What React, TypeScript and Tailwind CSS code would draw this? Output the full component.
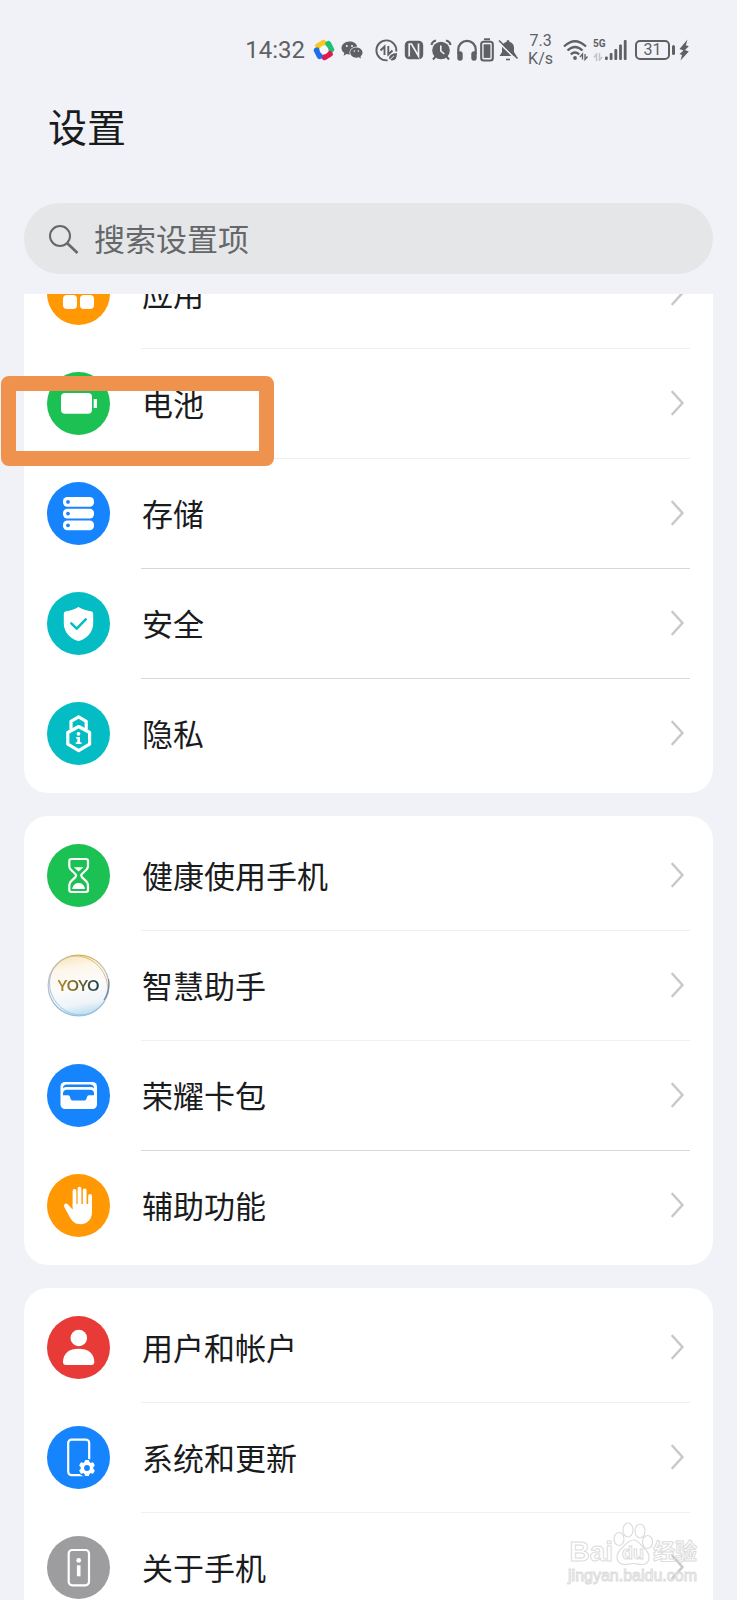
import type { ReactNode } from "react";
import clsx from "clsx";

type Item = {
  label: string;
  bg: string;
  icon: ReactNode;
  strongLine?: boolean;
  marked?: boolean;
};

const AppsIcon = (
  <g fill="#fff">
    <rect x="16" y="16" width="14" height="14" rx="4" />
    <rect x="33" y="16" width="14" height="14" rx="4" />
    <rect x="16" y="33" width="14" height="14" rx="4" />
    <rect x="33" y="33" width="14" height="14" rx="4" />
  </g>
);

const BatteryIcon = (
  <g fill="#fff">
    <rect x="14" y="21" width="31" height="20.7" rx="4" />
    <rect x="46.7" y="27" width="3.3" height="9" rx="0.6" />
  </g>
);

const StorageIcon = (
  <g>
    {[15, 26.7, 38.4].map((y) => (
      <g key={y}>
        <rect x="16" y={y} width="31" height="9.8" rx="4.2" fill="#fff" />
        <circle cx="21" cy={y + 4.9} r="1.9" fill="#1684fc" />
      </g>
    ))}
  </g>
);

const ShieldIcon = (
  <g>
    <path
      d="M31.5 15 C36 17.6 40.5 19 44 19.3 Q46.2 19.5 46.2 21.8 V31.5 C46.2 40 40 45.8 33.5 48.6 Q31.5 49.4 29.5 48.6 C23 45.8 16.8 40 16.8 31.5 V21.8 Q16.8 19.5 19 19.3 C22.5 19 27 17.6 31.5 15 Z"
      fill="#fff"
    />
    <path d="M24.3 31.3 L29.7 36.6 L38.7 27.3" fill="none" stroke="#04bdc4" strokeWidth="2.5" strokeLinecap="round" strokeLinejoin="round" />
  </g>
);

const PrivacyIcon = (
  <g fill="none" stroke="#fff" strokeLinejoin="round">
    <path d="M24 27.5 V19.3 L31.6 14.8 L39.2 19.3 V27.5" strokeWidth="3.2" />
    <path d="M31.7 24.5 L42.6 30.5 V42.2 L31.7 48.6 L20.8 42.2 V30.5 Z" fill="#04bdc4" strokeWidth="3.2" />
    <circle cx="31.5" cy="31.8" r="1.9" fill="#fff" stroke="none" />
    <path d="M29 35 H33 V40.3 H34.5 V42 H28.7 V40.3 H30.3 V36.5 H29 Z" fill="#fff" stroke="none" />
  </g>
);

const HourglassIcon = (
  <g stroke="#fff" strokeWidth="2.2" strokeLinejoin="round">
    <path
      d="M24.5 15 H38.8 Q41 15 41 17.2 V22 C41 27 34.2 28.5 34.2 31.6 C34.2 34.7 41 36.3 41 41.5 V45.8 Q41 48 38.8 48 H24.5 Q22.3 48 22.3 45.8 V41.5 C22.3 36.3 29.1 34.7 29.1 31.6 C29.1 28.5 22.3 27 22.3 22 V17.2 Q22.3 15 24.5 15 Z"
      fill="none"
    />
    <path d="M26.8 23.3 H36.5 L31.6 27.5 Z" fill="#fff" stroke="none" />
    <path d="M25.2 45 C26 40.8 28.5 39 31.6 39 C34.7 39 37.3 40.8 38 45 Z" fill="#fff" stroke="none" />
  </g>
);

const WalletIcon = (
  <g>
    <rect x="13.5" y="18" width="36.5" height="27" rx="4.5" fill="#fff" />
    <g fill="#1684fc">
      <path d="M16 24.2 Q16.2 20.6 20 20.6 H43 Q46.8 20.6 47 24.2 Q45.8 23 43 23 H20 Q17.2 23 16 24.2 Z" />
      <path d="M16 31.2 V29.5 Q16.2 25.8 20 25.8 H43 Q46.8 25.8 47 29.5 V31.2 H42 Q40.7 31.2 40.2 32.5 L39.3 35 Q38.7 36.6 37.2 36.6 H25.8 Q24.3 36.6 23.7 35 L22.8 32.5 Q22.3 31.2 21 31.2 Z" />
    </g>
  </g>
);

const HandIcon = (
  <g fill="#fff" stroke="#fff" strokeLinecap="round">
    <path d="M27.5 32 V17 M32.5 32 V14.7 M37.7 32 V16.5 M43.1 34 V22" strokeWidth="3.8" />
    <path
      d="M25.7 30 H45 V38 C45 46 39.5 50.2 33.5 50.2 C28 50.2 25.5 47.5 23 43.5 L17.3 33 C16 30.2 19 28.3 21 30.4 L25.7 35.5 Z"
      stroke="none"
    />
  </g>
);

const UserIcon = (
  <g fill="#fff">
    <circle cx="31.8" cy="22" r="8.3" />
    <path d="M16 46 C16 37 22.5 32.7 31.6 32.7 C40.7 32.7 47.3 37 47.3 46 Q47.3 49 44.3 49 H19 Q16 49 16 46 Z" />
  </g>
);

const SystemIcon = (
  <g>
    <rect x="21.2" y="13.6" width="21" height="35.6" rx="3.5" fill="none" stroke="#fff" strokeWidth="2.2" />
    <circle cx="40" cy="42" r="9.3" fill="#1684fc" />
    <g fill="#fff">
      <circle cx="40" cy="42" r="6.4" />
      {[0, 60, 120].map((a) => (
        <rect key={a} x="37.7" y="33.9" width="4.6" height="16.2" rx="1.3" transform={`rotate(${a} 40 42)`} />
      ))}
    </g>
    <circle cx="40" cy="42" r="2.9" fill="#1684fc" />
  </g>
);

const AboutIcon = (
  <g>
    <rect x="21.7" y="14" width="20.3" height="35.3" rx="3.5" fill="none" stroke="#fff" strokeWidth="2.2" />
    <circle cx="31.7" cy="24.4" r="2.4" fill="#fff" />
    <rect x="29.9" y="29.3" width="3.6" height="11" fill="#fff" />
  </g>
);

const YoyoIcon = (
  <g fill="none">
    <defs>
      <linearGradient id="bubble" x1="0.4" y1="0" x2="0.6" y2="1">
        <stop offset="0" stopColor="#f9e6bd" />
        <stop offset="0.2" stopColor="#fdf6ea" />
        <stop offset="0.5" stopColor="#fcfbfb" />
        <stop offset="0.8" stopColor="#eef4f8" />
        <stop offset="1" stopColor="#b5dbf3" />
      </linearGradient>
      <linearGradient id="rim" x1="0.4" y1="0" x2="0.6" y2="1">
        <stop offset="0" stopColor="#d9b04a" />
        <stop offset="0.3" stopColor="#c3c6cc" />
        <stop offset="0.7" stopColor="#a9b8c8" />
        <stop offset="1" stopColor="#8cc4ea" />
      </linearGradient>
    </defs>
    <circle cx="31.5" cy="31.5" r="30.3" fill="url(#bubble)" stroke="url(#rim)" strokeWidth="1.3" />
    <ellipse cx="31.5" cy="31.5" rx="30.5" ry="28" stroke="url(#rim)" strokeWidth="0.8" transform="rotate(50 31.5 31.5)" />
    <path d="M61.5 25 Q63.5 36 57 46" stroke="#6f87a0" strokeWidth="1.2" />
  </g>
);

const groups: Item[][] = [
  [
    { label: "应用", bg: "bg-[#ff9803]", icon: AppsIcon },
    { label: "电池", bg: "bg-[#1bc153]", icon: BatteryIcon, marked: true },
    { label: "存储", bg: "bg-[#1684fc]", icon: StorageIcon, strongLine: true },
    { label: "安全", bg: "bg-[#04bdc4]", icon: ShieldIcon, strongLine: true },
    { label: "隐私", bg: "bg-[#04bdc4]", icon: PrivacyIcon },
  ],
  [
    { label: "健康使用手机", bg: "bg-[#1bc153]", icon: HourglassIcon },
    { label: "智慧助手", bg: "bg-white", icon: YoyoIcon },
    { label: "荣耀卡包", bg: "bg-[#1684fc]", icon: WalletIcon, strongLine: true },
    { label: "辅助功能", bg: "bg-[#ff9803]", icon: HandIcon },
  ],
  [
    { label: "用户和帐户", bg: "bg-[#e83b38]", icon: UserIcon },
    { label: "系统和更新", bg: "bg-[#1684fc]", icon: SystemIcon },
    { label: "关于手机", bg: "bg-[#9d9da0]", icon: AboutIcon },
  ],
];

function StatusBar() {
  return (
    <div className="flex h-[100px] shrink-0 items-center justify-end pr-12 font-[Roboto,sans-serif] text-[#5f6063]">
      <span className="text-2xl">14:32</span>
      <svg className="ml-2 h-[22px] w-[22px]" viewBox="0 0 22 22" fill="none" strokeWidth="6" strokeLinecap="round">
        <path d="M5.2 7 L10.5 3.8" stroke="#f9c623" />
        <path d="M15.3 4.8 L18.2 10.5" stroke="#1fc073" />
        <path d="M16.8 15 L11.5 18.2" stroke="#e5174f" />
        <path d="M3.8 11.5 L6.7 17.2" stroke="#1c6fe8" />
        <circle cx="11" cy="11" r="4.4" fill="#f4f6fa" />
      </svg>
      <svg className="ml-1.5 h-[22px] w-[22px]" viewBox="0 0 22 22" fill="currentColor">
        <path d="M8.5 2.5 C3.8 2.5 0.5 5.5 0.5 9 C0.5 11.2 1.6 12.9 3.3 14.1 L2.6 16.7 L5.6 15.1 Q7 15.6 8.8 15.5 C7.5 11 11 7.3 16.2 7.4 C15.5 4.5 12.4 2.5 8.5 2.5 Z" />
        <path d="M15.3 8.5 C11.8 8.5 9.2 10.8 9.2 13.6 C9.2 16.4 11.8 18.7 15.3 18.7 Q16.6 18.7 17.7 18.3 L20 19.6 L19.5 17.4 C20.8 16.5 21.5 15.2 21.5 13.6 C21.5 10.8 18.8 8.5 15.3 8.5 Z" />
        <g fill="#f0f2f7">
          <circle cx="5.8" cy="7" r="1" />
          <circle cx="11" cy="7" r="1" />
          <circle cx="13.3" cy="12" r="0.8" />
          <circle cx="17.4" cy="12" r="0.8" />
        </g>
      </svg>
      <svg className="ml-3 h-[23px] w-[23px]" viewBox="0 0 23 23" fill="none" stroke="currentColor" strokeWidth="1.9">
        <path d="M12.5 21.3 A10 10 0 1 1 21.3 12.5" />
        <path d="M5.5 11.5 L9.5 7.5 V16 M13.3 7 V15.5 L17.5 11.5" />
        <path d="M14 19.5 Q14 14.5 22 14 Q22 21.5 17 21.5 Q15.5 21.5 14 19.5 Z" fill="currentColor" stroke="none" />
        <path d="M13 22.5 L19 16.8" stroke="#f0f2f7" strokeWidth="1" />
      </svg>
      <svg className="ml-1.5 h-5 w-5" viewBox="0 0 20 20" fill="none">
        <rect x="0.8" y="0.8" width="18.4" height="18.4" rx="4.5" fill="currentColor" />
        <path d="M5.2 16.5 V4 H7.5 L14.5 16 V3.5" stroke="#f0f2f7" strokeWidth="1.7" />
      </svg>
      <svg className="ml-1.5 h-[22px] w-[22px]" viewBox="0 0 22 22" fill="none" stroke="currentColor">
        <circle cx="11" cy="11.5" r="8.8" fill="currentColor" stroke="none" />
        <path d="M1.5 6 Q2 2.5 6 1.5 M20.5 6 Q20 2.5 16 1.5" strokeWidth="2.2" />
        <path d="M5.5 17.5 L3 20.5 M16.5 17.5 L19 20.5" strokeWidth="2" />
        <path d="M10.8 6.5 V12 L14.3 15" stroke="#f0f2f7" strokeWidth="1.6" />
      </svg>
      <svg className="ml-1 h-[22px] w-[22px]" viewBox="0 0 22 22" fill="none" stroke="currentColor">
        <path d="M2.3 15 V10.5 A8.700 8.700 0 0 1 19.7 10.5 V15" strokeWidth="2.2" />
        <path d="M4 15 V19 M18 15 V19" strokeWidth="5.4" strokeLinecap="round" />
      </svg>
      <svg className="ml-0.5 h-6 w-3.5" viewBox="0 0 14 24" fill="none">
        <path d="M4 1.3 H10" stroke="currentColor" strokeWidth="2" />
        <rect x="1.2" y="3.7" width="11.6" height="18.8" rx="2.5" stroke="currentColor" strokeWidth="2.1" />
        <rect x="3.6" y="6.3" width="6.8" height="13.6" fill="currentColor" />
      </svg>
      <svg className="ml-1 h-[22px] w-5" viewBox="0 0 20 22" fill="none">
        <path d="M10 1 Q11.5 1 11.5 2.7 Q16 4 16 9 V13 L18.5 17 H1.5 L4 13 V9 Q4 4 8.5 2.7 Q8.500 1 10 1 Z" fill="currentColor" />
        <path d="M8 20.5 H12" stroke="currentColor" strokeWidth="1.6" />
        <path d="M0 2.8 L18.5 20.8" stroke="#f0f2f7" strokeWidth="1.6" />
        <path d="M1 1.5 L19.5 19.5" stroke="currentColor" strokeWidth="1.6" />
      </svg>
      <span className="ml-2.5 flex flex-col text-center text-base leading-[18px]">
        <span>7.3</span>
        <span>K/s</span>
      </span>
      <svg className="ml-2.5 h-[22px] w-[26px]" viewBox="0 0 26 22" fill="none" stroke="currentColor" strokeWidth="2.3">
        <path d="M1 7.5 Q12 -3 23 7.5 M4.5 11.5 Q12 4.5 19.5 11.5 M7.8 15.3 Q12 11.7 16.2 15.3" />
        <circle cx="12" cy="19" r="1.9" fill="currentColor" stroke="none" />
        <path d="M19.5 20.5 V15 L17 18 M22 15 V20.5 L24.5 17.5" strokeWidth="1.3" />
      </svg>
      <span className="ml-1 flex h-[22px] w-3 flex-col justify-between">
        <span className="text-[10px] leading-[10px] font-bold">5G</span>
        <svg className="h-2 w-2.5" viewBox="0 0 10 8" fill="none" stroke="#c3c4c8" strokeWidth="1.5">
          <path d="M3.5 8 V1 L1 4.5 M6.5 0 V7 L9 4" />
        </svg>
      </span>
      <svg className="h-[22px] w-[22px]" viewBox="0 0 22 22" fill="currentColor">
        <rect x="0" y="17.5" width="2.8" height="3.5" rx="1" />
        <rect x="4.700" y="14" width="2.8" height="7" rx="1" />
        <rect x="9.4" y="10" width="2.8" height="11" rx="1" />
        <rect x="14.1" y="5.5" width="2.8" height="15.5" rx="1" />
        <rect x="18.8" y="1" width="2.8" height="20" rx="1" />
      </svg>
      <span className="ml-2 flex h-5 w-[35px] items-center justify-center rounded-[5px] border-2 border-[#5f6063] text-base leading-4">31</span>
      <span className="ml-0.5 h-2.5 w-[3px] rounded-xs bg-[#5f6063]" />
      <svg className="ml-1 h-[22px] w-2.5" viewBox="0 0 10 22" fill="currentColor">
        <path d="M8.5 0.5 L0.5 10 L4.5 11.5 L0.5 15 L3 16 L1.500 21.5 L9.8 12.5 L6 11 L9.8 7.3 L6.8 6.3 Z" />
      </svg>
    </div>
  );
}

function Row({ item, last }: { item: Item; last: boolean }) {
  return (
    <a href="#" className="relative flex h-[110px] shrink-0 pl-[23px]">
      <span className="flex w-[94px] items-center pb-0.5">
        <span className={clsx("relative h-[63px] w-[63px] rounded-full", item.bg)}>
          <svg className="h-full w-full" viewBox="0 0 63 63">
            {item.icon}
          </svg>
          {item.icon === YoyoIcon && (
            <span className="absolute inset-0 flex items-center justify-center">
              <span className="bg-linear-to-r from-[#b08a1c] via-[#6f6528] to-[#153f4c] bg-clip-text font-[Lato,sans-serif] text-[15px] font-bold text-transparent">
                YOYO
              </span>
            </span>
          )}
        </span>
      </span>
      <span
        className={clsx(
          "mr-[23px] flex flex-1 items-center justify-between border-b pr-1.5 pb-0.5",
          last ? "border-transparent" : item.strongLine ? "border-[#d8d8d8]" : "border-[#efefef]"
        )}
      >
        <span className="pl-px text-[31px] leading-10">{item.label}</span>
        <svg className="h-[26px] w-[13px]" viewBox="0 0 13 26" fill="none" stroke="#c9c9c9" strokeWidth="2.6" strokeLinecap="round" strokeLinejoin="round">
          <path d="M1.5 2 L11.5 13 L1.5 24" />
        </svg>
      </span>
      {item.marked && (
        <span className="absolute top-[27px] -left-[23px] z-10 h-[90px] w-[273px] rounded-lg border-[15px] border-[#ef924e]" />
      )}
    </a>
  );
}

function Watermark() {
  return (
    <div className="pointer-events-none absolute right-10 bottom-3.5 font-['Liberation_Sans','Noto_Sans_CJK_SC',sans-serif] font-bold text-white [-webkit-text-stroke:1px_#dcdcdc]">
      <div className="flex items-end justify-end">
        <span className="text-[28px] leading-7">Bai</span>
        <span className="relative h-11 w-10">
          <svg className="h-full w-full" viewBox="0 0 40 44" fill="#fff" stroke="#dcdcdc" strokeWidth="1.2">
            <ellipse cx="6" cy="17" rx="5" ry="6.5" />
            <ellipse cx="15" cy="8" rx="5" ry="7" />
            <ellipse cx="27" cy="9" rx="5" ry="7" />
            <ellipse cx="34.5" cy="20" rx="5" ry="6.5" />
            <path d="M20.5 18 C25 18 27 22 31 26 C38 32 38 42 29 42.5 C24 42.5 23 41.5 20.5 41.5 C18 41.5 16 42.5 12 42.5 C2 42 2 32 9 26 C13 22 16 18 20.5 18 Z" />
          </svg>
          <span className="absolute inset-x-0 bottom-1 text-center text-lg leading-[18px]">du</span>
        </span>
        <span className="text-[22px] leading-7">经验</span>
      </div>
      <div className="text-right text-base leading-5 font-normal">jingyan.baidu.com</div>
    </div>
  );
}

export default function App() {
  return (
    <div className="relative flex h-screen flex-col overflow-hidden bg-[#f0f2f7] font-['Noto_Sans_CJK_SC',sans-serif] text-[#1a1b1d]">
      <StatusBar />
      <h1 className="px-12 text-[39px] leading-[50px]">设置</h1>
      <label className="mx-6 mt-[53px] flex h-[71px] shrink-0 items-center gap-3.5 rounded-full bg-[#e5e6e8] px-6">
        <svg className="h-8 w-8 shrink-0" viewBox="0 0 32 32" fill="none" stroke="#66676a" strokeWidth="2">
          <circle cx="12" cy="13" r="10" />
          <path d="M19 20 L29.5 30" strokeWidth="2.6" />
        </svg>
        <input
          type="text"
          aria-label="搜索设置项"
          placeholder="搜索设置项"
          className="w-full bg-transparent pb-0.5 text-[31px] leading-10 outline-none placeholder:text-[#66676a]"
        />
      </label>
      <main className="mt-5 flex min-h-0 flex-1 flex-col gap-[23px] overflow-hidden px-6">
        {groups.map((items, g) => (
          <section key={items[0].label} className={clsx("shrink-0 bg-white pb-1", g === 0 ? "rounded-b-3xl" : "rounded-3xl pt-[5px]")}>
            {items.map((item, i) =>
              g === 0 && i === 0 ? (
                // scrolled halfway under the search bar
                <div key={item.label} className="flex h-[55px] flex-col justify-end overflow-hidden">
                  <Row item={item} last={false} />
                </div>
              ) : (
                <Row key={item.label} item={item} last={i === items.length - 1} />
              )
            )}
          </section>
        ))}
      </main>
      <Watermark />
    </div>
  );
}
